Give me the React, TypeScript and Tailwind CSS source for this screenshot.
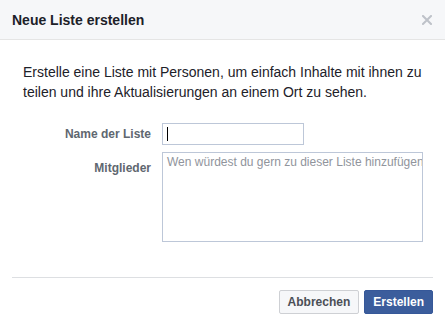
import { useState } from 'react';

export default function App() {
  const [name, setName] = useState('');
  const [members, setMembers] = useState('');

  return (
    <div className="w-[445px] h-[326px] bg-white flex flex-col overflow-hidden font-['Liberation_Sans',Arial,sans-serif] text-[#1d2129]">
      {/* Kopfzeile */}
      <div className="h-[40px] shrink-0 flex items-center justify-between pl-3 pr-[13px] bg-[#f6f7f9] border-b border-[#e5e5e5]">
        <h2 className="text-[14px] font-bold leading-none">Neue Liste erstellen</h2>
        <button className="w-[10px] h-[10px] flex items-center justify-center">
          <svg width="10" height="10" viewBox="0 0 10 10">
            <path d="M1 1L9 9M9 1L1 9" stroke="#bec2c9" strokeWidth="2" strokeLinecap="square" />
          </svg>
        </button>
      </div>

      <div className="flex-1 px-3 pt-[22px]">
        <p className="ml-[11px] text-[14px] leading-[20px]">
          Erstelle eine Liste mit Personen, um einfach Inhalte mit ihnen zu teilen und ihre Aktualisierungen an einem Ort zu sehen.
        </p>

        <div className="mt-[21px] flex flex-col gap-[7px]">
          <div className="flex items-center">
            <label className="w-[139px] text-right text-[12px] font-bold text-[#606770]">Name der Liste</label>
            <div className="ml-[11px] relative w-[142px] h-[22px] border border-[#bdc7d8] bg-white">
              <input
                value={name}
                onChange={(e) => setName(e.target.value)}
                className="w-full h-full px-[4px] text-[12px] outline-none bg-transparent"
              />
              {name === '' && <span className="absolute left-[4px] top-[3px] w-px h-[14px] bg-black" />}
            </div>
          </div>
          <div className="flex items-start">
            <label className="w-[139px] pt-[7px] text-right text-[12px] font-bold text-[#606770]">Mitglieder</label>
            <textarea
              value={members}
              onChange={(e) => setMembers(e.target.value)}
              placeholder="Wen würdest du gern zu dieser Liste hinzufügen"
              className="ml-[11px] w-[261px] h-[90px] border border-[#bdc7d8] pl-[4px] pr-[2px] py-[2px] text-[12px] leading-[15px] resize-none outline-none whitespace-nowrap overflow-hidden placeholder:text-[#90949c]"
            />
          </div>
        </div>
      </div>

      {/* Fußzeile */}
      <div className="mx-3 border-t border-[#dddfe2] pt-3 pb-3 flex justify-end gap-[5px]">
        <button className="h-[24px] px-[8px] rounded-[2px] border border-[#ced0d4] bg-[#f6f7f9] text-[12px] font-bold text-[#4b4f56]">
          Abbrechen
        </button>
        <button className="h-[24px] px-[8px] rounded-[2px] border border-[#365899] bg-[#3b5d9c] text-[12px] font-bold text-white">
          Erstellen
        </button>
      </div>
    </div>
  );
}
